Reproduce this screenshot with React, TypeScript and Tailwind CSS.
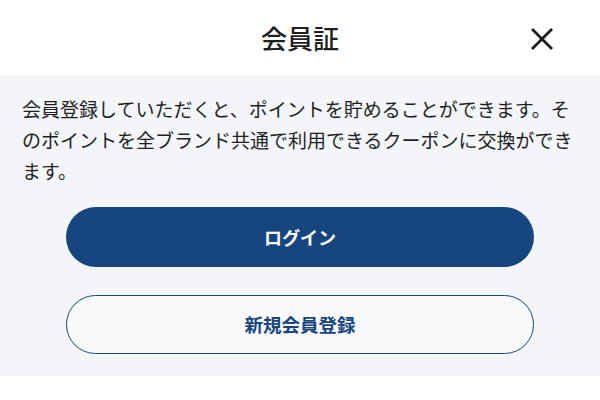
import React from 'react';

export default function App() {
  return (
    <div
      className="w-[600px] h-[400px] bg-white overflow-hidden text-[#1f1f1f]"
      style={{ fontFamily: '"Noto Sans CJK JP", "Noto Sans", sans-serif' }}
    >
      {/* header */}
      <header className="relative h-[75px] flex items-center justify-center">
        <h1 className="text-[26px] font-medium leading-none">会員証</h1>
        <button className="absolute right-[46px] top-[27px] w-[24px] h-[24px] flex items-center justify-center" aria-label="閉じる">
          <svg width="24" height="24" viewBox="0 0 24 24" fill="none" stroke="#1a1a1a" strokeWidth="2.8" strokeLinecap="square">
            <path d="M3 3L21 21M21 3L3 21" />
          </svg>
        </button>
      </header>

      {/* body */}
      <section className="bg-[#f4f5f9] h-[301px] px-[22px] pt-[18px]">
        <p className="text-[19px] leading-[31px] tracking-[0px]">
          会員登録していただくと、ポイントを貯めることができます。そのポイントを全ブランド共通で利用できるクーポンに交換ができます。
        </p>
        <div className="mt-[21px] px-[44px] flex flex-col gap-[28px]">
          <button className="h-[60px] w-full rounded-full bg-[#17467f] text-white text-[18px] font-bold">
            ログイン
          </button>
          <button className="h-[59px] w-full rounded-full border-[1.5px] border-[#17467f] bg-[#f8f9fb] text-[#17467f] text-[18.5px] font-bold">
            新規会員登録
          </button>
        </div>
      </section>
    </div>
  );
}
